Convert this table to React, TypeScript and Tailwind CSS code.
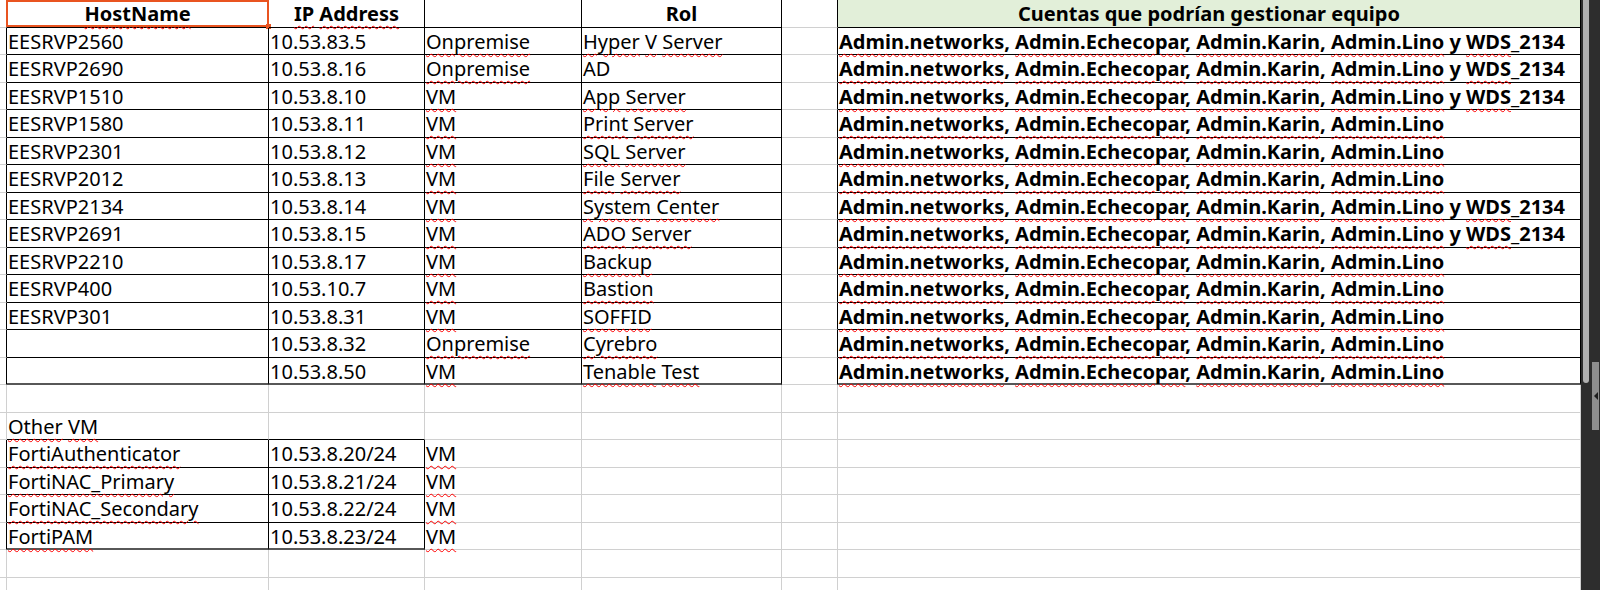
import React from "react";

const W = [
  "w-[7px]",
  "w-[262px]",
  "w-[156px]",
  "w-[157px]",
  "w-[200px]",
  "w-[56px]",
  "w-[743px]",
];

const S = ({ children }: { children: React.ReactNode }) => (
  <span className="underline decoration-wavy decoration-[#ff0000] decoration-1 underline-offset-[4px]">
    {children}
  </span>
);

const sq = (text: string, skip: string[] = []) => {
  const words = text.split(" ");
  return (
    <>
      {words.map((w, i) => (
        <React.Fragment key={i}>
          {i > 0 ? " " : null}
          {skip.includes(w) ? w : <S>{w}</S>}
        </React.Fragment>
      ))}
    </>
  );
};

const Accounts = ({ wds }: { wds: boolean }) => (
  <span className="font-bold">
    <S>Admin.networks</S>, <S>Admin.Echecopar</S>, <S>Admin.Karin</S>, <S>Admin.Lino</S>
    {wds ? (
      <>
        {" "}y <S>WDS</S>_2134
      </>
    ) : null}
  </span>
);

type RowDef = { cells: React.ReactNode[]; center?: boolean[]; green?: boolean };

const main: [string, string, string, string, boolean][] = [
  ["EESRVP2560", "10.53.83.5", "Onpremise", "Hyper V Server", true],
  ["EESRVP2690", "10.53.8.16", "Onpremise", "AD", true],
  ["EESRVP1510", "10.53.8.10", "VM", "App Server", true],
  ["EESRVP1580", "10.53.8.11", "VM", "Print Server", false],
  ["EESRVP2301", "10.53.8.12", "VM", "SQL Server", false],
  ["EESRVP2012", "10.53.8.13", "VM", "File Server", false],
  ["EESRVP2134", "10.53.8.14", "VM", "System Center", true],
  ["EESRVP2691", "10.53.8.15", "VM", "ADO Server", true],
  ["EESRVP2210", "10.53.8.17", "VM", "Backup", false],
  ["EESRVP400", "10.53.10.7", "VM", "Bastion", false],
  ["EESRVP301", "10.53.8.31", "VM", "SOFFID", false],
  ["", "10.53.8.32", "Onpremise", "Cyrebro", false],
  ["", "10.53.8.50", "VM", "Tenable Test", false],
];

const forti: [string, string][] = [
  ["FortiAuthenticator", "10.53.8.20/24"],
  ["FortiNAC_Primary", "10.53.8.21/24"],
  ["FortiNAC_Secondary", "10.53.8.22/24"],
  ["FortiPAM", "10.53.8.23/24"],
];

const rows: RowDef[] = [
  {
    cells: [
      null,
      <span className="font-bold"><S>HostName</S></span>,
      <span className="font-bold"><S>IP</S> <S>Address</S></span>,
      null,
      <span className="font-bold">Rol</span>,
      null,
      <span className="font-bold">Cuentas que podrían gestionar equipo</span>,
    ],
    center: [false, true, true, true, true, false, true],
    green: true,
  },
  ...main.map(([h, ip, t, rol, wds]) => ({
    cells: [null, h, ip, sq(t), sq(rol, ["AD"]), null, <Accounts wds={wds} />],
  })),
  { cells: [null, null, null, null, null, null, null] },
  { cells: [null, sq("Other VM"), null, null, null, null, null] },
  ...forti.map(([n, ip]) => ({
    cells: [null, <S>{n}</S>, ip, sq("VM"), null, null, null],
  })),
  { cells: [null, null, null, null, null, null, null] },
  { cells: [null, null, null, null, null, null, null] },
];

const inTable = (r: number, c: number) =>
  (r <= 13 && c >= 1 && c <= 4) ||
  (r <= 13 && c === 6) ||
  (r >= 16 && r <= 19 && (c === 1 || c === 2));

const lastRow = (r: number, c: number) =>
  (r === 13 && ((c >= 1 && c <= 4) || c === 6)) ||
  (r === 19 && (c === 1 || c === 2));

export default function App() {
  return (
    <div className="w-[1600px] h-[590px] overflow-hidden flex bg-white text-black font-['Noto_Sans',sans-serif] text-[20px]">
      <div className="w-[1581px] flex flex-col shrink-0">
        {rows.map((row, r) => (
          <div key={r} className="flex h-[27.5px] shrink-0">
            {W.map((w, c) => {
              const rb = inTable(r, c) || inTable(r, c + 1);
              const lr = lastRow(r, c);
              const bb = inTable(r, c) || inTable(r + 1, c);
              const bottom = lr
                ? "border-b-2 border-b-[#575757]"
                : bb
                ? "border-b border-b-black"
                : "border-b border-b-[#d0d0d0]";
              const right = rb ? "border-r-black" : "border-r-[#d0d0d0]";
              const green = row.green && c === 6 ? "bg-[#e2efd9]" : "";
              const center = row.center && row.center[c] ? "text-center" : "pl-[1px]";
              return (
                <div
                  key={c}
                  className={`${w} relative shrink-0 box-border border-r ${right} ${bottom} ${green} ${center} leading-[27.3px] whitespace-nowrap`}
                >
                  {row.cells[c]}
                  {r === 0 && c === 1 ? (
                    <>
                      <div className="absolute -left-[1px] top-0 w-[263px] h-[27px] border-2 border-[#e95420]" />
                      <div className="absolute left-[259px] top-[24px] w-[5px] h-[5px] bg-[#e95420]" />
                    </>
                  ) : null}
                </div>
              );
            })}
          </div>
        ))}
      </div>
      <div className="w-[19px] h-[590px] bg-[#2d2d2d] flex shrink-0">
        <div className="w-[2px] shrink-0" />
        <div className="w-[6px] h-[383px] bg-[#b0b0b0] rounded-b-[3px] shrink-0" />
        <div className="w-[3px] shrink-0" />
        <div className="flex flex-col w-[7px] shrink-0">
          <div className="h-[362px] shrink-0" />
          <div className="h-[68px] bg-[#8e8e8e] flex items-center justify-center">
            <div className="w-0 h-0 border-y-[4px] border-y-transparent border-r-[4px] border-r-[#1e1e1e]" />
          </div>
        </div>
      </div>
    </div>
  );
}
